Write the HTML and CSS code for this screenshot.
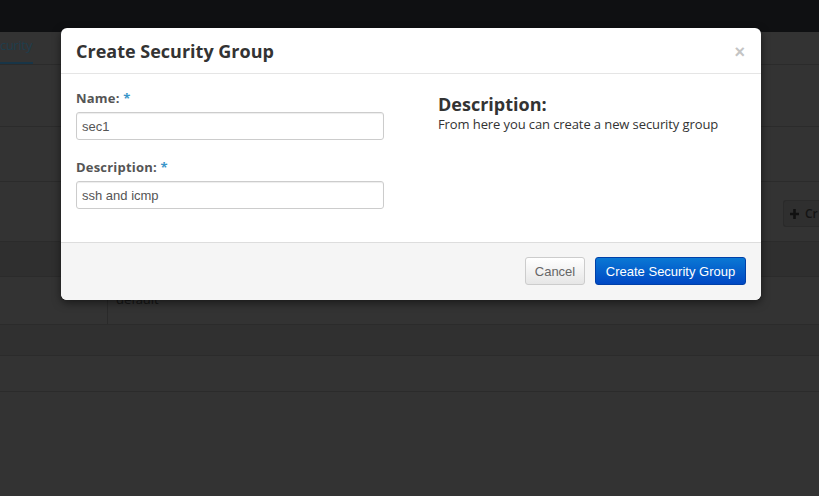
FILE: index.html
```html
<!DOCTYPE html>
<html>
<head>
<meta charset="utf-8">
<link rel="stylesheet" href="styles.css">
</head>
<body>
<div class="page">
  <div class="topbar"></div>
  <div class="tabs">
    <div class="tab active">curity</div>
  </div>
  <div class="band b1"></div>
  <div class="band b2"></div>
  <div class="band b3">
    <div class="ghost-btn"><svg class="plus" width="9" height="10" viewBox="0 0 9 10"><path d="M3.2 0h2.6v3.7H9v2.6H5.8V10H3.2V6.3H0V3.7h3.2z" fill="#111"/></svg><span class="ghost-label">Cr</span></div>
  </div>
  <div class="band thead"></div>
  <div class="band trow">
    <div class="cell first"></div>
    <div class="cell">default</div>
  </div>
  <div class="band b5"></div>
  <div class="band b6"></div>
</div>

<div class="modal">
  <div class="modal-header">
    <h2 class="modal-title">Create Security Group</h2>
    <span class="close">×</span>
  </div>
  <div class="modal-body">
    <div class="form-col">
      <div class="field">
        <label class="label">Name: <span class="req">*</span></label>
        <input class="input" type="text" value="sec1">
      </div>
      <div class="field">
        <label class="label">Description: <span class="req">*</span></label>
        <input class="input" type="text" value="ssh and icmp">
      </div>
    </div>
    <div class="help-col">
      <h3 class="help-title">Description:</h3>
      <p class="help-text">From here you can create a new security group</p>
    </div>
  </div>
  <div class="modal-footer">
    <button class="btn btn-default">Cancel</button>
    <button class="btn btn-primary">Create Security Group</button>
  </div>
</div>
</body>
</html>
```
FILE: styles.css
```css
html, body {
  margin: 0;
  padding: 0;
  height: 100%;
  background: #333333;
  overflow: hidden;
}
body {
  position: relative;
  font-family: "Open Sans", "DejaVu Sans", sans-serif;
}
.page {
  display: flex;
  flex-direction: column;
}
.topbar {
  height: 32px;
  background: #0f1012;
}
.tabs {
  height: 32px;
  border-bottom: 1px solid #2b2b2b;
  display: flex;
  align-items: flex-end;
}
.tab {
  font-size: 13px;
  color: #1f3d4c;
  padding: 0 1px 8px 0;
  border-bottom: 2px solid #183547;
  line-height: 18px;
  letter-spacing: -0.3px;
}
.band {
  border-bottom: 1px solid #2b2b2b;
  position: relative;
}
.b1 { height: 61px; }
.b2 { height: 54px; }
.b3 {
  height: 59px;
  display: flex;
  align-items: center;
  justify-content: flex-end;
}
.thead { height: 34px; background: #2f2f2f; }
.trow { height: 47px; display: flex; }
.b5 { height: 30px; background: #303030; }
.b6 { height: 35px; }
.ghost-btn {
  flex: none;
  display: flex;
  align-items: center;
  gap: 6px;
  height: 27px;
  box-sizing: border-box;
  border: 1px solid #2a2a2a;
  border-right: none;
  border-radius: 3px 0 0 3px;
  background: #2f2f2f;
  color: #141414;
  font-size: 12px;
  font-weight: 600;
  line-height: 25px;
  padding: 0 0 0 6px;
  width: 36px;
  white-space: nowrap;
  margin-top: 4px;
}
.plus {
  flex: none;
  display: block;
}
.cell {
  padding: 13px 8px;
  font-size: 13px;
  color: #161616;
  line-height: 18px;
}
.cell.first {
  width: 91px;
  border-right: 1px solid #2a2a2a;
}

.modal {
  position: absolute;
  left: 61px;
  top: 28px;
  width: 700px;
  background: #fff;
  border-radius: 6px;
  box-shadow: 0 3px 9px rgba(0,0,0,0.5);
  overflow: hidden;
}
.modal-header {
  height: 45px;
  border-bottom: 1px solid #e5e5e5;
  display: flex;
  align-items: center;
  justify-content: space-between;
  padding: 0 15px;
}
.modal-title {
  margin: 0;
  font-size: 18px;
  font-weight: 700;
  color: #333;
  line-height: 24px;
}
.close {
  font-family: "Liberation Sans", Arial, sans-serif;
  font-size: 18px;
  font-weight: 700;
  color: #c4c4c4;
  line-height: 18px;
  margin-top: 2px;
  margin-right: 1px;
}
.modal-body {
  display: flex;
  padding: 14px 15px 32px 15px;
  height: 122px;
}
.form-col {
  width: 308px;
  display: flex;
  flex-direction: column;
  gap: 17px;
}
.field {
  display: flex;
  flex-direction: column;
}
.label {
  font-size: 13px;
  font-weight: 700;
  color: #555;
  line-height: 20px;
  margin-bottom: 4px;
  letter-spacing: 0.2px;
}
.req {
  color: #3a96c9;
}
.input {
  box-sizing: border-box;
  width: 308px;
  height: 28px;
  border: 1px solid #cccccc;
  border-radius: 3px;
  box-shadow: inset 0 1px 1px rgba(0,0,0,0.075);
  padding: 4px 5px;
  font-family: "Liberation Sans", Arial, sans-serif;
  font-size: 13px;
  color: #555;
  margin: 0;
}
.help-col {
  margin-left: 54px;
  padding-top: 5px;
}
.help-title {
  margin: 0;
  font-size: 18px;
  font-weight: 700;
  color: #333;
  line-height: 22px;
}
.help-text {
  margin: 0;
  font-size: 13px;
  color: #333;
  line-height: 18px;
  letter-spacing: -0.1px;
}
.modal-footer {
  height: 57px;
  background: #f5f5f5;
  border-top: 1px solid #dddddd;
  display: flex;
  align-items: center;
  justify-content: flex-end;
  padding: 0 15px;
  gap: 10px;
}
.btn {
  height: 28px;
  box-sizing: border-box;
  border-radius: 3px;
  font-family: "Liberation Sans", Arial, sans-serif;
  font-size: 13px;
  padding: 0;
  margin: 0;
  margin-top: -1px;
  white-space: nowrap;
}
.btn-default {
  width: 60px;
  background: linear-gradient(#ffffff, #e6e6e6);
  border: 1px solid #cccccc;
  color: #666;
}
.btn-primary {
  width: 151px;
  background: linear-gradient(#0a78d4, #0048c4);
  border: 1px solid #0040a8;
  color: #fff;
}
```
